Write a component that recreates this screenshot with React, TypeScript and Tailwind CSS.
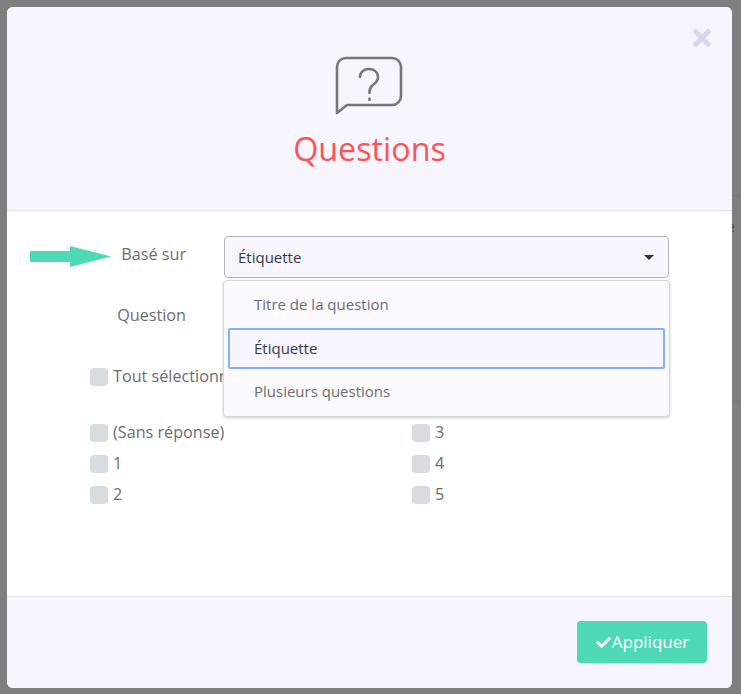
import { FaCheck, FaTimes } from 'react-icons/fa';

const leftOptions = ['(Sans réponse)', '1', '2'];
const rightOptions = ['3', '4', '5'];

function Option({ label }: { label: string }) {
  return (
    <label className="flex h-[31px] items-center gap-[5px]">
      <span className="h-[18px] w-[18px] shrink-0 rounded-[4px] bg-[#d6dcdf]" />
      <span className="-mt-[1px] whitespace-nowrap">{label}</span>
    </label>
  );
}

export default function App() {
  return (
    <div className="relative h-[694px] w-[741px] overflow-hidden bg-[#7f7f7f] pl-[7px] pr-[9px] pt-[7px] pb-[6px] font-['Open_Sans',sans-serif] text-[14px] text-[#6c6c70]">
      {/* Page behind the backdrop, only a sliver shows */}
      <div className="absolute right-0 top-[195px] h-px w-[9px] bg-[#767676]" />
      <div className="absolute right-0 top-[400px] h-px w-[9px] bg-[#787878]" />
      <span className="absolute left-[727px] top-[216px] text-[14px] text-[#36444e]">e</span>

      <div className="relative flex h-full flex-col overflow-hidden rounded-[6px] bg-white">
        {/* Header */}
        <div className="relative flex h-[204px] shrink-0 flex-col items-center border-b border-[#e4e4e8] bg-[#f7f6ff] pt-[49px]">
          <button className="absolute right-[21px] top-[18px] text-[#d9d4f1]">
            <FaTimes className="h-[26px] w-[18px]" />
          </button>
          <svg className="-ml-[2px]" width="68" height="60" viewBox="0 0 68 60" fill="none" stroke="#77777b" strokeWidth="2.6">
            <path d="M2 57V11a9 9 0 0 1 9-9h46a9 9 0 0 1 9 9v29a9 9 0 0 1-9 9H12z" strokeLinejoin="round" />
            <path d="M25 21c0-5 4-8 9-8s9 3 9 8c0 4-2.500 6-5 8-2 1.500-3.500 3-3.500 6.500v1.500" strokeLinecap="round" />
            <path d="M34.500 42.500v1.500" strokeLinecap="round" />
          </svg>
          <h1 className="mt-[10px] text-[32.300px] leading-[44px] text-[#ff5255]">Questions</h1>
        </div>

        {/* Body */}
        <div className="relative flex-1 text-[16.200px]">
          <div className="flex items-start pt-[25px]">
            <div className="w-[179px] pt-[6px] text-right">Basé sur</div>
            <div className="ml-[38px] flex h-[42px] w-[445px] items-center justify-between rounded-[4px] border border-[#b4b4b8] bg-[#f7f6ff] pl-[13px] pr-[14px] text-[15px] text-[#333a45]">
              <span>Étiquette</span>
              <span className="h-0 w-0 border-x-[5px] border-t-[5px] border-x-transparent border-t-[#333]" />
            </div>
          </div>

          <div className="mt-[25px] w-[179px] text-right">Question</div>

          <div className="ml-[83px] mt-[34px]">
            <Option label="Tout sélectionner" />
          </div>

          <div className="ml-[83px] mt-[25px] grid w-[500px] grid-cols-[322px_1fr]">
            <div className="flex flex-col">
              {leftOptions.map((o) => (
                <Option key={o} label={o} />
              ))}
            </div>
            <div className="flex flex-col">
              {rightOptions.map((o) => (
                <Option key={o} label={o} />
              ))}
            </div>
          </div>

          {/* Arrow */}
          <svg className="absolute left-[23px] top-[35px]" width="81" height="21" viewBox="0 0 81 21">
            <path d="M0 5h40V0l41 10.500L40 21v-5H0z" fill="#4dd9b5" />
          </svg>

          {/* Dropdown menu */}
          <div className="absolute left-[216px] top-[69px] h-[137px] w-[447px] rounded-[4px] border border-[#d8d8dc] bg-[#fbfaff] px-[4px] pt-[2px] text-[15px] shadow-[0_1px_3px_rgba(0,0,0,0.2)]">
            <div className="flex h-[45px] items-center pb-[2px] pl-[26px]">Titre de la question</div>
            <div className="flex h-[41px] items-center rounded-[2px] border-2 border-[#80b1fb] bg-[#f7f5ff] pl-[24px] text-[#333a45]">Étiquette</div>
            <div className="flex h-[45px] items-center pl-[26px]">Plusieurs questions</div>
          </div>
        </div>

        {/* Footer */}
        <div className="flex h-[92px] shrink-0 items-start justify-end border-t border-[#e4e4e8] bg-[#f7f6ff] pr-[25px] pt-[24px]">
          <button className="flex h-[42px] w-[130px] items-center justify-center rounded-[4px] bg-[#4dd9b5] text-[17px] text-white">
            <FaCheck className="h-[15px] w-[17px]" />
            Appliquer
          </button>
        </div>
      </div>
    </div>
  );
}
